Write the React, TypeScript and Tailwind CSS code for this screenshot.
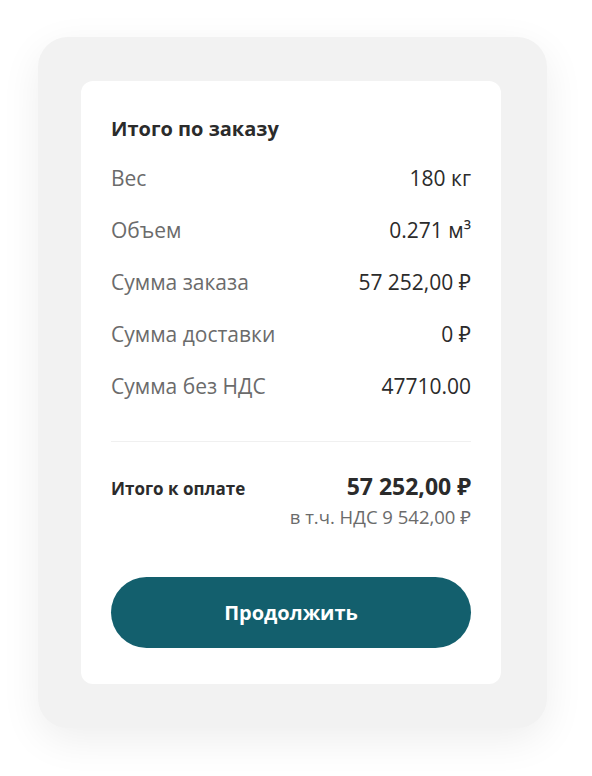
import React from 'react';

const rows = [
  { label: 'Вес', value: '180 кг' },
  { label: 'Объем', value: '0.271 м³' },
  { label: 'Сумма заказа', value: '57 252,00 ₽' },
  { label: 'Сумма доставки', value: '0 ₽' },
  { label: 'Сумма без НДС', value: '47710.00' },
];

const App: React.FC = () => {
  return (
    <div className="w-[592px] h-[776px] bg-white pt-[37px] pl-[38px] font-['Open_Sans','Noto_Sans',sans-serif]">
      <div className="w-[509px] rounded-[30px] bg-[#f2f2f2] p-[44px] pl-[43px] shadow-[0_12px_40px_rgba(0,0,0,0.07)]">
        <div className="w-[420px] rounded-xl bg-white px-[30px] pt-9 pb-9">
          {/* Title */}
          <h2 className="text-[20px] leading-6 font-bold text-[#2b2b2b]">Итого по заказу</h2>

          {/* Rows */}
          <div className="mt-[23px] flex flex-col gap-6">
            {rows.map((r) => (
              <div key={r.label} className="flex justify-between items-center text-[21px] leading-7">
                <span className="text-[#6b6b6b]">{r.label}</span>
                <span className="text-[#2b2b2b]">{r.value}</span>
              </div>
            ))}
          </div>

          <div className="mt-[41px] h-px bg-[#f0f0f0]" />

          {/* Total */}
          <div className="mt-[30px] flex justify-between items-baseline">
            <span className="text-[17px] leading-7 font-bold text-[#2b2b2b]">Итого к оплате</span>
            <span className="text-[23px] leading-7 font-bold text-[#2b2b2b]">57 252,00 ₽</span>
          </div>
          <div className="mt-1 text-right text-[18.5px] leading-5 text-[#6b6b6b]">в т.ч. НДС 9 542,00 ₽</div>

          <button className="mt-[50px] w-full h-[71px] rounded-full bg-[#135f6d] text-white text-[20px] font-bold">
            Продолжить
          </button>
        </div>
      </div>
    </div>
  );
};

export default App;
